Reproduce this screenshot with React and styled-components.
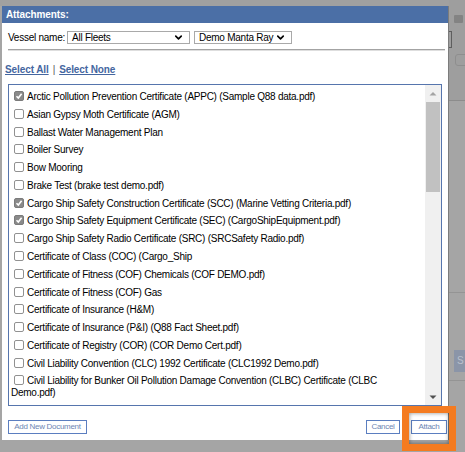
import React from 'react'
import styled, { createGlobalStyle } from 'styled-components'
import { ChevronDown } from 'lucide-react'

const documents = [
  { label: 'Arctic Pollution Prevention Certificate (APPC) (Sample Q88 data.pdf)', checked: true },
  { label: 'Asian Gypsy Moth Certificate (AGM)' },
  { label: 'Ballast Water Management Plan' },
  { label: 'Boiler Survey' },
  { label: 'Bow Mooring' },
  { label: 'Brake Test (brake test demo.pdf)' },
  { label: 'Cargo Ship Safety Construction Certificate (SCC) (Marine Vetting Criteria.pdf)', checked: true },
  { label: 'Cargo Ship Safety Equipment Certificate (SEC) (CargoShipEquipment.pdf)', checked: true },
  { label: 'Cargo Ship Safety Radio Certificate (SRC) (SRCSafety Radio.pdf)' },
  { label: 'Certificate of Class (COC) (Cargo_Ship' },
  { label: 'Certificate of Fitness (COF) Chemicals (COF DEMO.pdf)' },
  { label: 'Certificate of Fitness (COF) Gas' },
  { label: 'Certificate of Insurance (H&M)' },
  { label: 'Certificate of Insurance (P&I) (Q88 Fact Sheet.pdf)' },
  { label: 'Certificate of Registry (COR) (COR Demo Cert.pdf)' },
  { label: 'Civil Liability Convention (CLC) 1992 Certificate (CLC1992 Demo.pdf)' },
  { label: 'Civil Liability for Bunker Oil Pollution Damage Convention (CLBC) Certificate (CLBC Demo.pdf)' },
  // next row is scrolled out of view, only its box edge peeks in
  { label: '' },
]

const GlobalStyle = createGlobalStyle`
  html, body {
    margin: 0;
    padding: 0;
  }
  body {
    background: #a5a5a5;
    font-family: "Liberation Sans", Arial, sans-serif;
    font-size: 10px;
    letter-spacing: -0.25px;
    color: #000;
  }
`

const Page = styled.div`
  width: 465px;
  height: 452px;
  overflow: hidden;
  display: flex;
  flex-direction: column;
`
const TopStrip = styled.div`
  height: 6px;
  flex: none;
  background: #a0a0a0;
`
const Main = styled.div`
  flex: 1;
  display: flex;
  align-items: flex-start;
`
const Dialog = styled.div`
  margin-left: 2px;
  width: 447px;
  height: 434px;
  box-sizing: border-box;
  background: #fff;
  border-right: 1px solid #7c7c7c;
  display: flex;
  flex-direction: column;
  flex: none;
`
const Header = styled.div`
  height: 17px;
  line-height: 17px;
  padding-left: 4px;
  background: #4b6fa6;
  color: #fff;
  font-weight: bold;
  letter-spacing: -0.1px;
`
const VesselRow = styled.div`
  margin-top: 8px;
  height: 13px;
  padding-left: 6px;
  display: flex;
  align-items: center;
`
const FieldLabel = styled.span`
  width: 59px;
  line-height: 13px;
`
const Select = styled.div`
  box-sizing: border-box;
  width: ${p => p.$width}px;
  height: 13px;
  margin-right: 4px;
  border: 1px solid #a9a9a9;
  padding: 0 5px 0 4px;
  display: flex;
  align-items: center;
  justify-content: space-between;
  line-height: 11px;
  svg {
    flex: none;
  }
`
const Divider = styled.div`
  margin: 5px 3px 0 6px;
  border-top: 1px solid #a3a3a3;
  border-bottom: 1px solid #dedede;
`
const LinkRow = styled.div`
  margin-top: 13px;
  height: 12px;
  line-height: 12px;
  padding-left: 3px;
  font-weight: bold;
  letter-spacing: -0.1px;
  color: #4466a0;
`
const TextLink = styled.a`
  color: #4466a0;
  text-decoration: underline;
`
const Pipe = styled.span`
  color: #555;
  font-weight: normal;
  margin: 0 4px;
`
const ListBox = styled.div`
  margin: 8px 0 0 6px;
  width: 434px;
  height: 322px;
  box-sizing: border-box;
  border: 1px solid #5675ad;
  display: flex;
  overflow: hidden;
`
const Items = styled.div`
  flex: 1;
  padding: 2.8px 10px 0 2px;
  overflow: hidden;
`
const Row = styled.div`
  padding: 3.15px 0;
  line-height: 11.5px;
  min-height: 11.5px;
`
const Box = styled.span`
  display: inline-block;
  box-sizing: border-box;
  width: 10px;
  height: 10px;
  margin: 0 3px 0 3px;
  vertical-align: -1px;
  border-radius: 2px;
  border: 1px solid ${p => (p.$checked ? '#7b7b7b' : '#919191')};
  background: ${p => (p.$checked ? '#8a8a8a' : '#fff')};
  position: relative;
  svg {
    position: absolute;
    left: 0;
    top: 0;
  }
`
const ScrollBar = styled.div`
  width: 16px;
  flex: none;
  background: #f0f0f0;
  display: flex;
  flex-direction: column;
  align-items: center;
`
const ArrowCell = styled.div`
  height: ${p => p.$h}px;
  flex: none;
  display: flex;
  align-items: center;
  justify-content: center;
`
const Thumb = styled.div`
  width: 14px;
  height: 90px;
  background: #c1c1c1;
`
const Track = styled.div`
  flex: 1;
`
const Footer = styled.div`
  margin: 14px 1px 0 6px;
  height: 14px;
  display: flex;
  align-items: stretch;
`
const Spacer = styled.div`
  flex: 1;
`
const Button = styled.button`
  box-sizing: border-box;
  height: 14px;
  width: ${p => p.$width}px;
  padding: 0;
  background: #fff;
  border: 1px solid #5b7ec0;
  border-radius: 0;
  color: #6e86b4;
  font-family: "Liberation Sans", Arial, sans-serif;
  font-size: 8px;
  letter-spacing: -0.3px;
  line-height: 12px;
`
const Highlight = styled.span`
  position: relative;
  display: flex;
  margin-left: 11px;
  &::after {
    content: '';
    position: absolute;
    top: -14px;
    left: -9px;
    right: -9px;
    bottom: -17px;
    border: 7px solid #f47b20;
    box-shadow: inset 0 0 4px rgba(0, 0, 0, 0.45);
    pointer-events: none;
  }
`
const Side = styled.div`
  flex: 1;
  align-self: stretch;
  margin-top: -6px;
  display: flex;
  flex-direction: column;
`
const SideTop = styled.div`
  height: 100px;
  background: #9e9e9e;
  border-bottom: 1px solid #8c8c8c;
  display: flex;
  flex-direction: column;
`
const SideIcon = styled.div`
  margin: 15px 0 0 5px;
  width: 9px;
  height: 8px;
  background: #838383;
  border-radius: 1px;
`
const BoxEdge = styled.div`
  margin-top: 8px;
  width: 2px;
  height: 15px;
  border: 1px solid #5e5e5e;
  border-left: none;
`
const RoundBox = styled.div`
  margin: 6px 0 0 6px;
  width: 14px;
  height: 10px;
  border: 1px solid #8e8e8e;
  border-radius: 3px;
`
const SideMid = styled.div`
  height: 191px;
  border-bottom: 1px solid #949494;
`
const SideButton = styled.div`
  margin: 57px 0 0 5px;
  height: 22px;
  background: #8b95a8;
  color: #b9c0cc;
  line-height: 22px;
  padding-left: 3px;
`
const SideLine = styled.div`
  margin-top: 8px;
  border-top: 1px solid #949494;
`

const Check = () => (
  <svg width="8" height="8" viewBox="0 0 8 8">
    <path d="M1.5 4.2 L3.3 6 L6.6 1.8" fill="none" stroke="#fff" strokeWidth="1.6" />
  </svg>
)

const Triangle = ({ up, color }) => (
  <svg width="8" height="5" viewBox="0 0 8 5">
    <path d={up ? 'M0.5 4.5 L4 1 L7.5 4.5 Z' : 'M0.5 0.5 L4 4 L7.5 0.5 Z'} fill={color} />
  </svg>
)

const App = () => {
  return (
    <Page>
      <GlobalStyle />
      <TopStrip />
      <Main>
        <Dialog>
          <Header>Attachments:</Header>
          <VesselRow>
            <FieldLabel>Vessel name:</FieldLabel>
            <Select $width={123}>
              <span>All Fleets</span>
              <ChevronDown size={11} strokeWidth={3.5} />
            </Select>
            <Select $width={98}>
              <span>Demo Manta Ray</span>
              <ChevronDown size={11} strokeWidth={3.5} />
            </Select>
          </VesselRow>
          <Divider />
          <LinkRow>
            <TextLink>Select All</TextLink>
            <Pipe>|</Pipe>
            <TextLink>Select None</TextLink>
          </LinkRow>
          <ListBox>
            <Items>
              {documents.map((doc, i) => (
                <Row key={i}>
                  <Box $checked={doc.checked}>{doc.checked && <Check />}</Box>
                  {doc.label}
                </Row>
              ))}
            </Items>
            <ScrollBar>
              <ArrowCell $h={17}>
                <Triangle up color="#a3a3a3" />
              </ArrowCell>
              <Thumb />
              <Track />
              <ArrowCell $h={16}>
                <Triangle color="#505050" />
              </ArrowCell>
            </ScrollBar>
          </ListBox>
          <Footer>
            <Button $width={79}>Add New Document</Button>
            <Spacer />
            <Button $width={34}>Cancel</Button>
            <Highlight>
              <Button $width={36}>Attach</Button>
            </Highlight>
          </Footer>
        </Dialog>
        <Side>
          <SideTop>
            <SideIcon />
            <BoxEdge />
            <RoundBox />
          </SideTop>
          <SideMid />
          <SideButton>S</SideButton>
          <SideLine />
        </Side>
      </Main>
    </Page>
  )
}

export default App
